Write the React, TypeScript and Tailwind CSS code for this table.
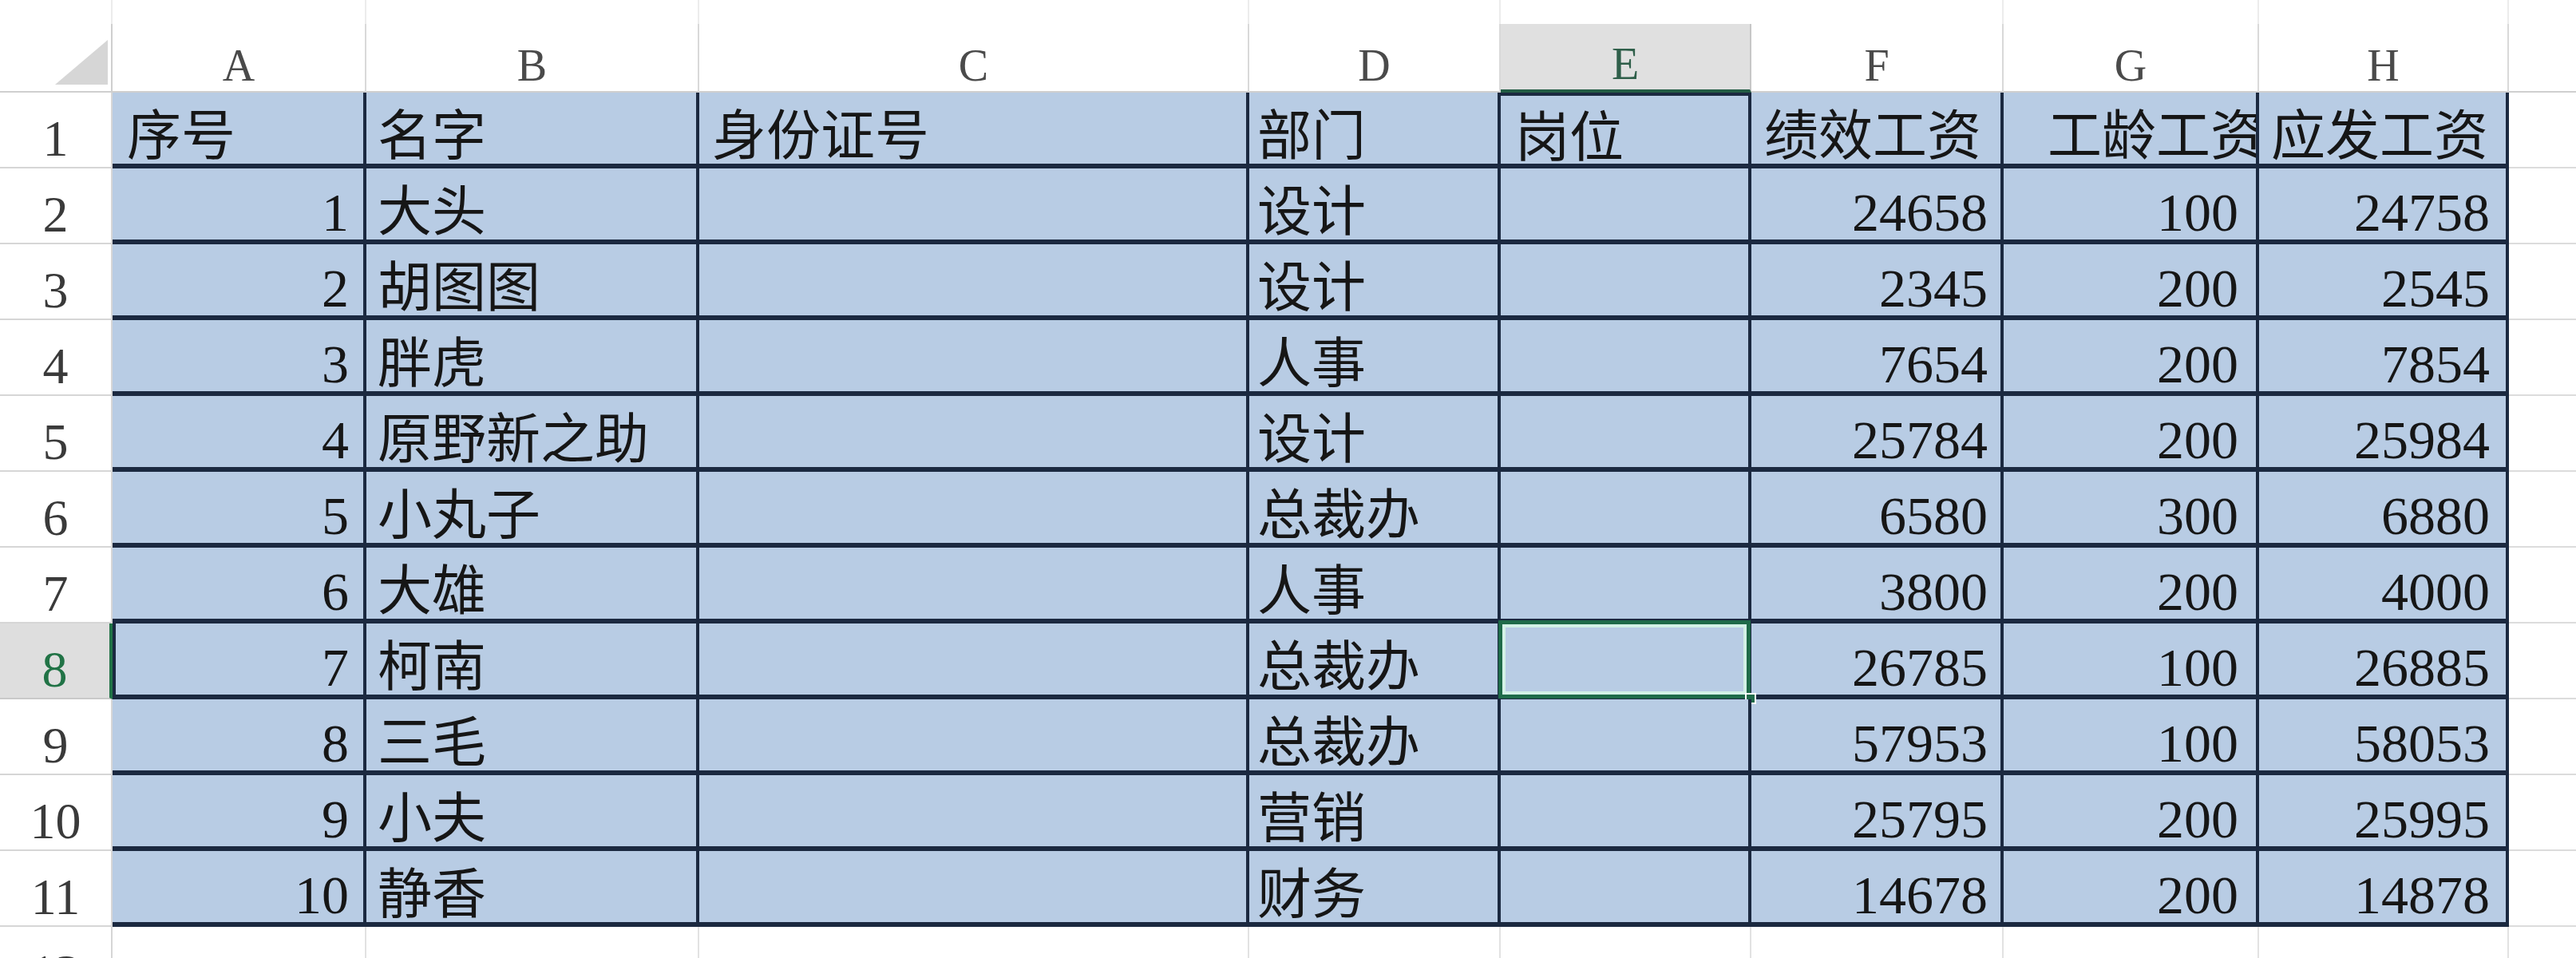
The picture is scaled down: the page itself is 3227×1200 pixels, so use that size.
import React from "react";

type Row = [number, string, string, string, string, number, number, number];

const COLS = ["A", "B", "C", "D", "E", "F", "G", "H"];

const ROWS: Row[] = [
  [1, "大头", "", "设计", "", 24658, 100, 24758],
  [2, "胡图图", "", "设计", "", 2345, 200, 2545],
  [3, "胖虎", "", "人事", "", 7654, 200, 7854],
  [4, "原野新之助", "", "设计", "", 25784, 200, 25984],
  [5, "小丸子", "", "总裁办", "", 6580, 300, 6880],
  [6, "大雄", "", "人事", "", 3800, 200, 4000],
  [7, "柯南", "", "总裁办", "", 26785, 100, 26885],
  [8, "三毛", "", "总裁办", "", 57953, 100, 58053],
  [9, "小夫", "", "营销", "", 25795, 200, 25995],
  [10, "静香", "", "财务", "", 14678, 200, 14878],
];

const gridCols =
  "grid grid-cols-[141px_318px_417px_689px_315px_314px_316px_320px_313px_84px]";

const base =
  "flex items-center pt-[20px] bg-[#b8cce4] border-r-4 border-b-[6px] border-[#1b2940] whitespace-nowrap text-[68px] leading-none text-[#161616]";
const cell = `${base} overflow-hidden`;

function RowHead({ n, active }: { n: number; active?: boolean }) {
  return (
    <div
      className={
        active
          ? "flex items-center justify-center pt-[22px] bg-[#dedede] border-b-2 border-r-4 border-[#c9c9c9] border-r-[#217346] text-[64px] leading-none text-[#217346]"
          : "flex items-center justify-center pt-[22px] bg-white border-b-2 border-r-2 border-[#d6d6d6] text-[64px] leading-none text-[#3a3a3a]"
      }
    >
      {n}
    </div>
  );
}

function Blank() {
  return <div className="bg-white border-b-2 border-[#dcdcdc]" />;
}

export default function App() {
  return (
    <div className="w-[3227px] h-[1200px] overflow-hidden bg-white font-['Liberation_Serif','Noto_Sans_CJK_SC',serif]">
      {/* strip above column letters */}
      <div className={`${gridCols} h-[30px]`}>
        <div className="border-r-2 border-[#ececec]" />
        {COLS.map((c) => (
          <div key={c} className={c === "E" ? "bg-white" : "border-r-2 border-[#ececec]"} />
        ))}
        <div />
      </div>

      {/* column letters */}
      <div className={`${gridCols} h-[86px]`}>
        <div className="relative bg-white border-r-2 border-b-2 border-[#cfcfcf]">
          <svg className="absolute left-[69px] top-[20px]" width="66" height="56" viewBox="0 0 66 56">
            <polygon points="66,0 66,56 0,56" fill="#d6d6d6" />
          </svg>
        </div>
        {COLS.map((c) => (
          <div
            key={c}
            className={
              c === "E"
                ? "flex items-end justify-center pb-[4px] bg-[#e0e0e0] border-r-2 border-b-4 border-[#c6c6c6] border-b-[#235c44] text-[56px] leading-none text-[#2f5f4a]"
                : "flex items-end justify-center pb-[4px] bg-white border-r-2 border-b-2 border-[#d9d9d9] border-b-[#cfcfcf] text-[56px] leading-none text-[#4a4a4a]"
            }
          >
            {c}
          </div>
        ))}
        <div className="bg-white border-b-2 border-[#cfcfcf]" />
      </div>

      {/* header row 1 */}
      <div className={`${gridCols} h-[95px]`}>
        <RowHead n={1} />
        <div className={`${cell} pl-[18px]`}>序号</div>
        <div className={`${cell} pl-[14px]`}>名字</div>
        <div className={`${cell} pl-[16px]`}>身份证号</div>
        <div className={`${cell} pl-[10px]`}>部门</div>
        <div className={`${cell} pl-[18px] border-t-4`}>岗位</div>
        <div className={`${cell} pl-[16px]`}>绩效工资</div>
        <div className={`${cell} pl-[55px]`}>工龄工资</div>
        <div className={`${cell} justify-end pr-[22px]`}>应发工资</div>
        <Blank />
      </div>

      {ROWS.map((r, i) => {
        const rowNo = i + 2;
        const active = rowNo === 8;
        return (
          <div key={rowNo} className={`${gridCols} h-[95px]`}>
            <RowHead n={rowNo} active={active} />
            <div className={`${cell} justify-end pr-[18px] ${active ? "border-l-4" : ""}`}>{r[0]}</div>
            <div className={`${cell} pl-[14px]`}>{r[1]}</div>
            <div className={cell}>{r[2]}</div>
            <div className={`${cell} pl-[10px]`}>{r[3]}</div>
            <div className={`${base} relative`}>
              {active && (
                <>
                  <div className="absolute left-[-3px] right-[-3px] top-[-4px] bottom-[-5px] border-[5px] border-[#1f6b49] shadow-[inset_0_0_0_4px_#d3f1e6]" />
                  <div className="absolute right-[-10px] bottom-[-12px] w-[14px] h-[14px] bg-[#1f6b49] border-2 border-white" />
                </>
              )}
            </div>
            <div className={`${cell} justify-end pr-[16px]`}>{r[5]}</div>
            <div className={`${cell} justify-end pr-[22px]`}>{r[6]}</div>
            <div className={`${cell} justify-end pr-[20px]`}>{r[7]}</div>
            <Blank />
          </div>
        );
      })}

      {/* row 12, cut by the window edge */}
      <div className={`${gridCols} h-[95px]`}>
        <RowHead n={12} />
        {COLS.map((c) => (
          <div key={c} className="bg-white border-r-2 border-b-2 border-[#e2e2e2]" />
        ))}
        <Blank />
      </div>
    </div>
  );
}
